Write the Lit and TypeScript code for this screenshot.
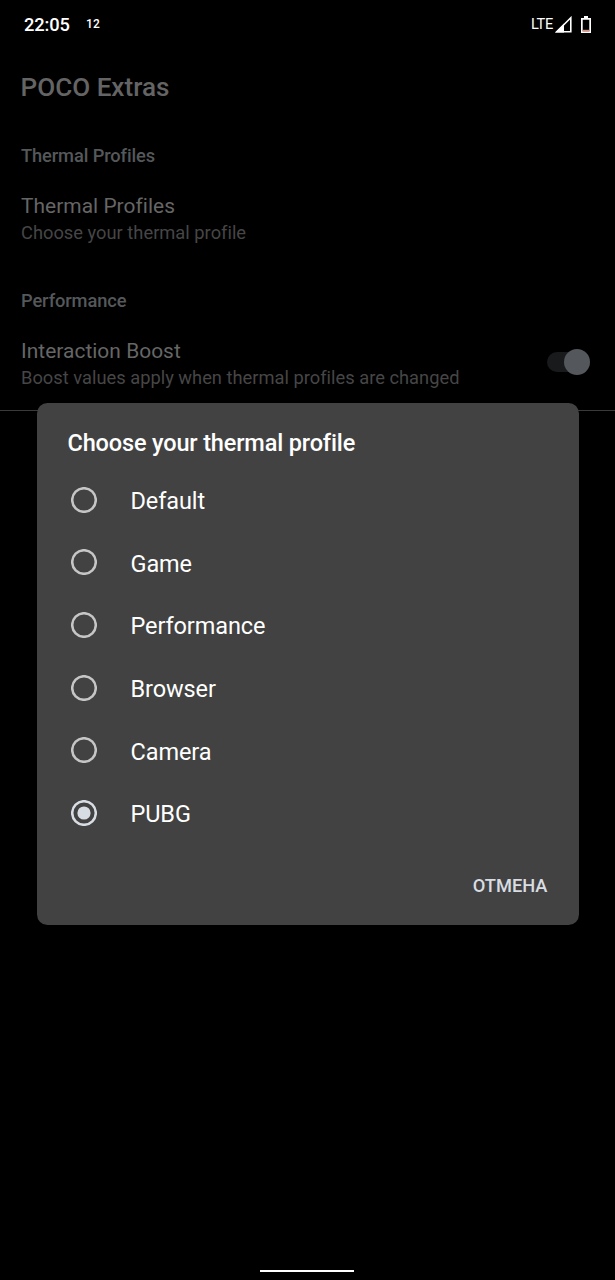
import { LitElement, html, css, svg } from "lit";
import { customElement, state } from "lit/decorators.js";
import { classMap } from "lit/directives/class-map.js";

const PROFILES = ["Default", "Game", "Performance", "Browser", "Camera", "PUBG"];

@customElement("app-root")
export class AppRoot extends LitElement {
  @state() private selected = "PUBG";

  static styles = css`
    :host {
      display: block;
      position: relative;
      width: 100%;
      height: 1280px;
      overflow: hidden;
      background: #000;
      color: #fff;
      font-family: Roboto, "Noto Sans", sans-serif;
    }
    .page { display: flex; flex-direction: column; height: 100%; white-space: nowrap; }
    .status { display: flex; align-items: center; height: 49px; padding: 0 23px 0 24px; box-sizing: border-box; }
    .clock { font-size: 18.3px; font-weight: 500; letter-spacing: -0.15px; line-height: 21px; width: 62px; }
    .date { font-size: 12px; font-weight: 500; letter-spacing: 0.2px; line-height: 15px; flex: 1; }
    .lte { font-size: 14.6px; letter-spacing: -0.3px; line-height: 17px; margin-right: 2px; }
    .signal { display: block; margin-right: 8px; }
    .battery { display: block; }
    .title { font-size: 26.1px; font-weight: 500; line-height: 40px; margin: 18px 0 0 20.5px; color: #646464; }
    .section { font-size: 18.3px; font-weight: 500; letter-spacing: -0.11px; line-height: 24px; padding-left: 21px; color: #55585b; }
    .first { margin-top: 37px; }
    .second { margin-top: 43px; }
    .pref { display: flex; align-items: flex-start; height: 53px; margin-top: 25px; padding: 0 25.5px 0 21px; }
    .texts { flex: 1; }
    .name { font-size: 20.9px; letter-spacing: 0.04px; line-height: 27px; color: #666; }
    .summary { font-size: 18.3px; letter-spacing: 0.01px; line-height: 26px; color: #464646; }
    .switch { display: flex; align-items: center; justify-content: flex-end; width: 43px; height: 20px; margin-top: 14px; border-radius: 10px; background: #191a1c; }
    .thumb { width: 26px; height: 26px; border-radius: 50%; background: #54575b; }
    .divider { height: 1px; margin-top: 19px; background: #3a3a3a; }
    .dialog {
      position: absolute; left: 36.5px; top: 403px; width: 542px; height: 522px;
      display: flex; flex-direction: column; box-sizing: border-box;
      padding: 24px 31px 23px; border-radius: 10.5px; background: #424242; white-space: nowrap;
    }
    .heading { font-size: 23.5px; font-weight: 500; letter-spacing: -0.15px; line-height: 33px; height: 41.4px; }
    .option { display: flex; align-items: center; height: 62.7px; cursor: pointer; }
    .radio { display: block; margin: 0 34px 0 3px; color: #c6c6c6; }
    .radio.on { color: #d8dde3; }
    .label { font-size: 23.5px; letter-spacing: -0.1px; line-height: 30px; padding-top: 2.6px; }
    .actions { display: flex; justify-content: flex-end; margin-top: auto; }
    .cancel { font: 500 18.3px/32px Roboto, sans-serif; color: #d8dde3; background: none; border: 0; padding: 0; }
    .home { width: 94px; height: 2px; margin: auto 0 8px 260px; background: #fff; }
  `;

  private radio(on: boolean) {
    return html`<svg class=${classMap({ radio: true, on })} width="26" height="26" viewBox="0 0 26 26">
      <circle cx="13" cy="13" r="11.8" fill="none" stroke="currentColor" stroke-width="2.5"/>
      ${on ? svg`<circle cx="13" cy="13" r="6.6" fill="currentColor"/>` : null}
    </svg>`;
  }

  render() {
    return html`
      <div class="page">
        <div class="status">
          <span class="clock">22:05</span><span class="date">12</span>
          <span class="lte">LTE</span>
          <svg class="signal" width="17" height="17" viewBox="0 0 17 17">
            <path d="M1.8 15.8 L15.8 1.8 V15.8Z" fill="none" stroke="#fff" stroke-width="1.6"/>
            <path d="M0 16.6 L9 7.6 V16.6Z" fill="#fff"/>
          </svg>
          <svg class="battery" width="12" height="17" viewBox="0 0 12 17">
            <path d="M4 0H8V2H11V17H1V2H4Z M2.7 3.8V15.2H9.3V3.8Z" fill="#fff" fill-rule="evenodd"/>
            <path d="M2.4 13.8H9.6V15.6H2.4Z" fill="#d99184"/>
          </svg>
        </div>
        <div class="title">POCO Extras</div>
        <div class="section first">Thermal Profiles</div>
        <div class="pref">
          <div class="texts">
            <div class="name">Thermal Profiles</div>
            <div class="summary">Choose your thermal profile</div>
          </div>
        </div>
        <div class="section second">Performance</div>
        <div class="pref">
          <div class="texts">
            <div class="name">Interaction Boost</div>
            <div class="summary">Boost values apply when thermal profiles are changed</div>
          </div>
          <div class="switch"><div class="thumb"></div></div>
        </div>
        <div class="divider"></div>
        <div class="home"></div>
      </div>
      <div class="dialog" role="dialog">
        <div class="heading">Choose your thermal profile</div>
        ${PROFILES.map((p) => html`
          <div class="option" @click=${() => (this.selected = p)}>
            ${this.radio(p === this.selected)}<span class="label">${p}</span>
          </div>`)}
        <div class="actions"><button class="cancel">ОТМЕНА</button></div>
      </div>
    `;
  }
}
